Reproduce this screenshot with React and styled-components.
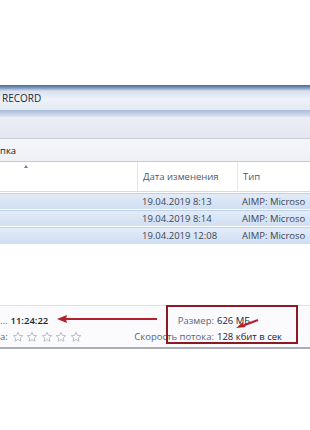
import React from 'react';
import styled, { createGlobalStyle } from 'styled-components';

const Global = createGlobalStyle`
  html, body { margin: 0; padding: 0; background: #fff; }
  body { font-family: "Open Sans", "Noto Sans", sans-serif; color: #1e2a3a; }
`;

const Page = styled.div`
  width: 310px;
  height: 430px;
  overflow: hidden;
  padding-top: 85px;
  box-sizing: border-box;
  background: #fff;
`;

const TitleBar = styled.div`
  height: 25px;
  display: flex;
  align-items: center;
  padding: 0 0 0 2px;
  font-size: 10px;
  color: #1b2838;
  background: linear-gradient(#4a6994 0px, #7f9aBE 3px, #d8e1ee 6px, #eef2f8 14px, #e4eaf3 25px);
`;

const Stripe = styled.div`
  height: 7px;
  background: linear-gradient(#a9bcd8, #c6d3e6 60%, #dde4ef);
`;

const Toolbar = styled.div`
  height: 21px;
  background: linear-gradient(#eceef5, #e4e7f0);
  border-bottom: 1px solid #c9ced9;
`;

const AddressBar = styled.div`
  height: 22px;
  display: flex;
  align-items: center;
  font-size: 9.5px;
  color: #222;
  background: linear-gradient(#f5f6fa, #eef0f6);
  border-bottom: 1px solid #c4c9d4;
`;

const Grid = styled.div`
  display: grid;
  grid-template-columns: 137px 100px 1fr;
`;

const Header = styled(Grid)`
  height: 29px;
  background: #fff;
  border-bottom: 1px solid #d5dbe5;
  font-size: 9.5px;
  color: #4a5a70;
  position: relative;
`;

const HeadCell = styled.div`
  display: flex;
  align-items: center;
  padding-left: ${p => (p.$first ? 0 : 5)}px;
  border-left: ${p => (p.$first ? 'none' : '1px solid #e2e6ee')};
`;

const SortMark = styled.div`
  position: absolute;
  left: 24px;
  top: 3px;
  width: 0;
  height: 0;
  border-left: 2px solid transparent;
  border-right: 2px solid transparent;
  border-bottom: 3px solid #6a7a90;
`;

const Row = styled(Grid)`
  height: 15px;
  margin-top: 1px;
  background: linear-gradient(#e2ebf8, #d0dff3);
  border-top: 1px solid #bfd1ea;
  font-size: 9.5px;
  color: #3c4656;
`;

const Cell = styled.div`
  display: flex;
  align-items: center;
  padding-left: 5px;
  white-space: nowrap;
`;

const Gap = styled.div`
  height: 61px;
  border-top: 1px solid #d6dbe4;
`;

const StatusBar = styled.div`
  position: relative;
  height: 44px;
  display: flex;
  justify-content: space-between;
  align-items: center;
  padding: 4px 0 0;
  box-sizing: border-box;
  background: #fbfbfd;
  border-top: 1px solid #dde1e8;
  border-bottom: 2px solid #a9aeb8;
  font-size: 9.5px;
`;

const LeftInfo = styled.div`
  display: flex;
  flex-direction: column;
  gap: 1px;
`;

const Line = styled.div`
  display: flex;
  align-items: center;
  height: 15px;
  color: #5a6577;
  white-space: nowrap;
`;

const Strong = styled.span`
  color: #1c2430;
  font-weight: 600;
  margin-left: ${p => p.$gap || 0}px;
`;

const Stars = styled.div`
  display: flex;
  gap: 2.5px;
  margin-left: 4px;
`;

const Facts = styled.div`
  display: grid;
  grid-template-columns: auto auto;
  column-gap: 3px;
  row-gap: 1px;
  margin-right: 28px;
  white-space: nowrap;
`;

const Label = styled.div`
  text-align: right;
  color: #5a6577;
  height: 15px;
  line-height: 15px;
`;

const Value = styled.div`
  color: #1c2430;
  height: 15px;
  line-height: 15px;
`;

const Overlay = styled.svg`
  position: absolute;
  left: 0;
  top: -1px;
  pointer-events: none;
`;

const Star = () => (
  <svg width="12" height="12" viewBox="0 0 24 24">
    <path
      d="M12 2.5l2.9 6.2 6.6.7-4.9 4.5 1.4 6.6L12 17.1l-6 3.4 1.4-6.6-4.9-4.5 6.6-.7z"
      fill="#fafbfd"
      stroke="#a8b0bc"
      strokeWidth="1.6"
      strokeLinejoin="round"
    />
  </svg>
);

const rows = [
  ['19.04.2019 8:13', 'AIMP: Microso'],
  ['19.04.2019 8:14', 'AIMP: Microso'],
  ['19.04.2019 12:08', 'AIMP: Microso'],
];

export default function App() {
  return (
    <Page>
      <Global />
      <TitleBar>RECORD</TitleBar>
      <Stripe />
      <Toolbar />
      <AddressBar>пка</AddressBar>
      <Header>
        <SortMark />
        <HeadCell $first />
        <HeadCell>Дата изменения</HeadCell>
        <HeadCell>Тип</HeadCell>
      </Header>
      {rows.map(([date, type], i) => (
        <Row key={i}>
          <Cell />
          <Cell>{date}</Cell>
          <Cell>{type}</Cell>
        </Row>
      ))}
      <Gap />
      <StatusBar>
        <LeftInfo>
          <Line>
            ...<Strong $gap={3}>11:24:22</Strong>
          </Line>
          <Line>
            а:
            <Stars>
              {[0, 1, 2, 3, 4].map(n => (
                <Star key={n} />
              ))}
            </Stars>
          </Line>
        </LeftInfo>
        <Facts>
          <Label>Размер:</Label>
          <Value>626 МБ</Value>
          <Label>Скорость потока:</Label>
          <Value>128 кбит в сек</Value>
        </Facts>
        <Overlay width="310" height="44" viewBox="0 0 310 44">
          <rect x="167" y="1" width="130" height="37" fill="none" stroke="#8c1a24" strokeWidth="2" />
          <line x1="157" y1="14" x2="64" y2="14" stroke="#b3202b" strokeWidth="2" />
          <path d="M57 14 L67 10 L66 14 L67 18 Z" fill="#b3202b" />
          <line x1="258" y1="15" x2="242" y2="21" stroke="#b3202b" strokeWidth="2" />
          <path d="M236 23 L243 17 L243 20 L246 22 Z" fill="#b3202b" />
        </Overlay>
      </StatusBar>
    </Page>
  );
}
